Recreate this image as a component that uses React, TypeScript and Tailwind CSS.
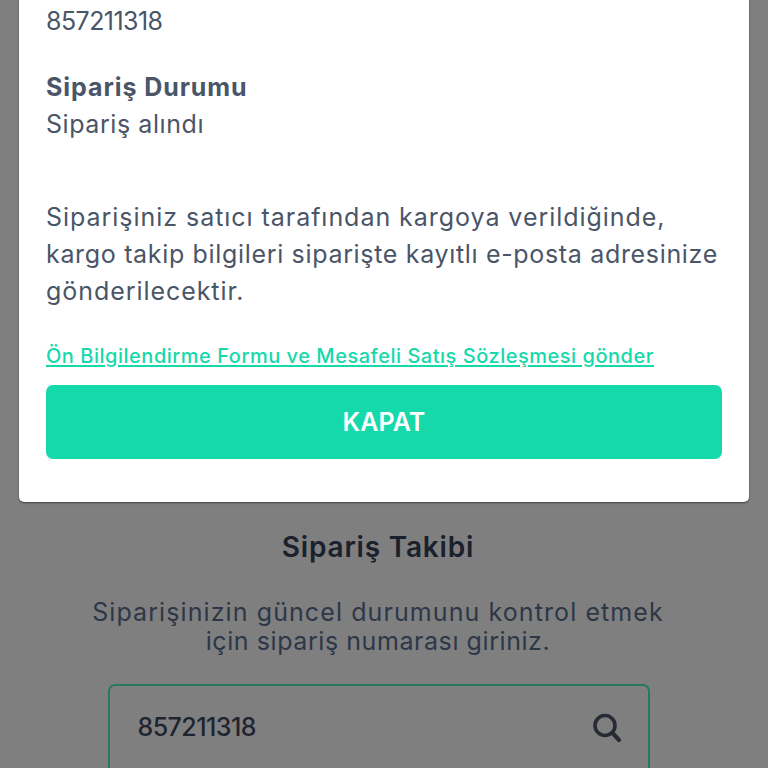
const font = { fontFamily: 'Inter, "Open Sans", sans-serif' };

function SearchIcon() {
  return (
    <svg width="30" height="30" viewBox="0 0 30 30" fill="none" stroke="#262b35">
      <circle cx="13" cy="12.5" r="10" strokeWidth="3.6" />
      <path d="M20.5 20 L27 27" strokeWidth="4.2" strokeLinecap="round" />
    </svg>
  );
}

export default function App() {
  return (
    <div style={font} className="h-[768px] w-[768px] overflow-hidden bg-[#7f7f7f]">
      <div className="mx-[19px] h-[502px] rounded-b-[5px] bg-white px-[27px] pt-[3px] shadow-[0_1px_2px_rgba(0,0,0,0.5)]">
        <p className="h-[37px] text-[25px] leading-[37px] tracking-[-0.55px] text-[#4a5568]">857211318</p>
        <p className="mt-[29px] h-[37px] text-[25px] leading-[37px] font-bold tracking-[0.93px] text-[#4a5568]">Sipariş Durumu</p>
        <p className="h-[37px] text-[25px] leading-[37px] tracking-[0.57px] text-[#4a5568]">Sipariş alındı</p>
        <div className="mt-[56px] w-[690px] text-[25px] leading-[37px] text-[#4a5568]">
          <p className="tracking-[0.96px]">Siparişiniz satıcı tarafından kargoya verildiğinde,</p>
          <p className="tracking-[0.67px]">kargo takip bilgileri siparişte kayıtlı e-posta adresinize</p>
          <p className="tracking-[0.94px]">gönderilecektir.</p>
        </div>
        <a className="mt-[31px] block h-[30px] text-[20px] leading-[30px] font-medium tracking-[0.52px] text-[#16d9ab] underline decoration-2 underline-offset-2">
          Ön Bilgilendirme Formu ve Mesafeli Satış Sözleşmesi gönder
        </a>
        <button className="mt-[14px] flex h-[74px] w-full items-center justify-center rounded-[7px] bg-[#16d9ab] pt-[2px] text-[25px] font-semibold tracking-[0.1px] text-white">
          KAPAT
        </button>
      </div>
      <div className="flex flex-col items-center pr-[12px]">
        <h2 className="mt-[25px] text-[28px] leading-[40px] font-semibold tracking-[0.8px] text-[#1a202c]">Sipariş Takibi</h2>
        <div className="mt-[31px] text-center text-[25px] leading-[29px] text-[#2d3748]">
          <p className="tracking-[1.09px]">Siparişinizin güncel durumunu kontrol etmek</p>
          <p className="tracking-[0.57px]">için sipariş numarası giriniz.</p>
        </div>
        <div className="mt-[28px] ml-[1px] flex h-[90px] w-[542px] shrink-0 items-center justify-between rounded-[7px] border-2 border-[#27795f] pr-[26px] pl-[28px] pb-[3px]">
          <span className="text-[25px] font-medium tracking-[-0.55px] text-[#1f2530]">857211318</span>
          <SearchIcon />
        </div>
      </div>
    </div>
  );
}
